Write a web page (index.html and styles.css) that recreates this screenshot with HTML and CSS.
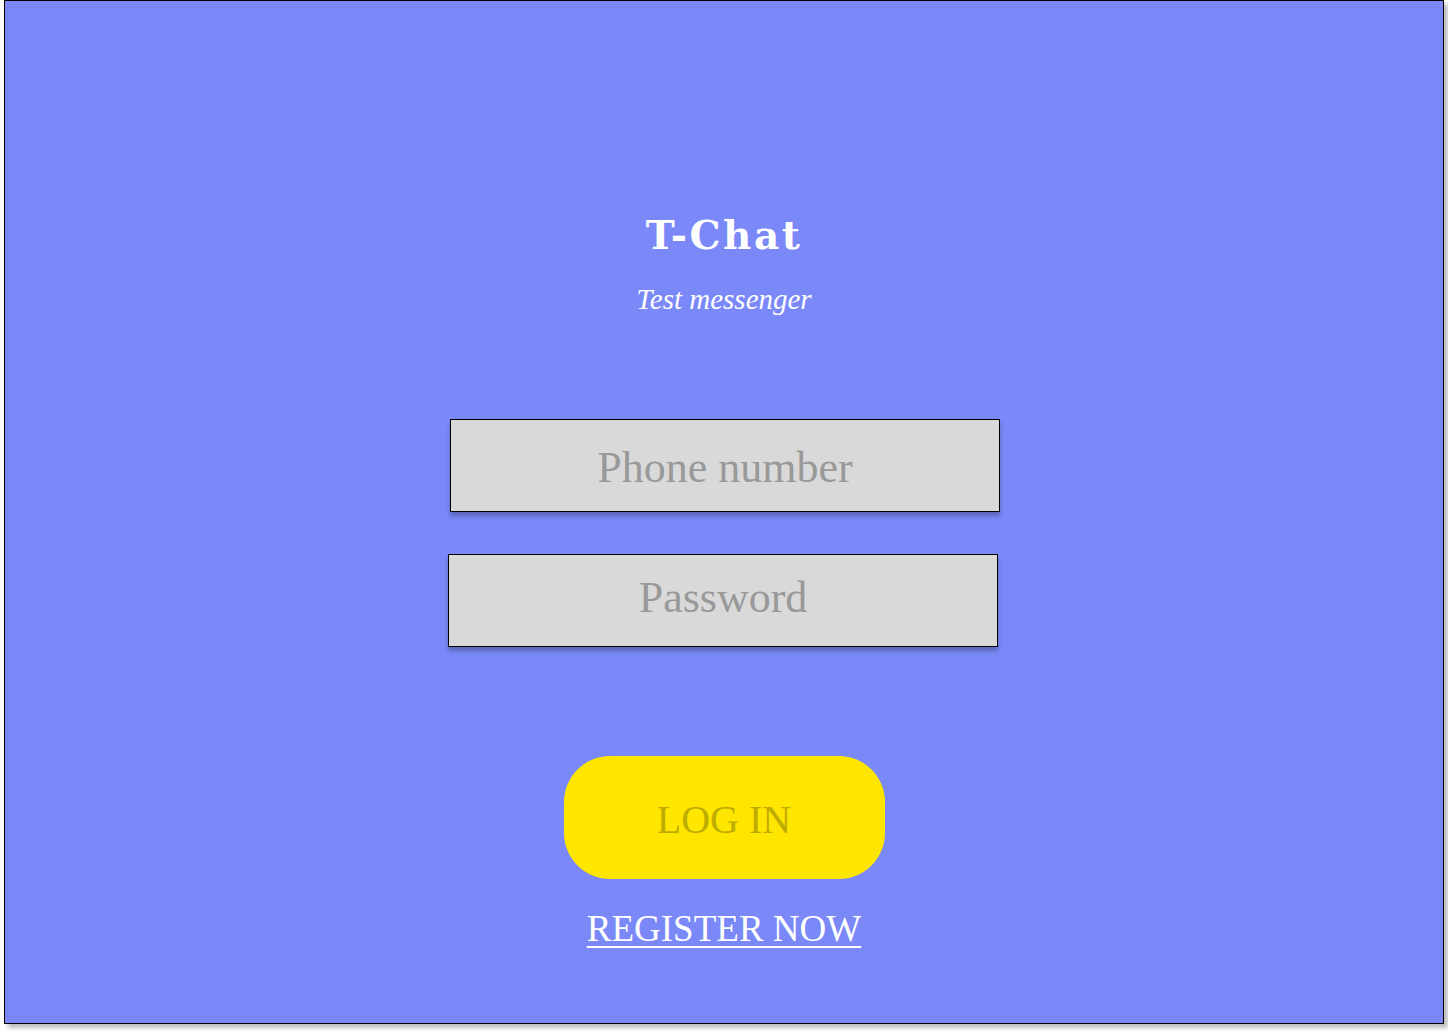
FILE: index.html
```html
<!DOCTYPE html>
<html lang="en">
<head>
<meta charset="utf-8">
<title>T-Chat</title>
<link rel="stylesheet" href="styles.css">
</head>
<body>
<main class="frame">
  <header class="brand">
    <h1 class="brand-title">T-Chat</h1>
    <p class="brand-sub">Test messenger</p>
  </header>
  <form class="login-form">
    <input class="field field-phone" type="text" placeholder="Phone number">
    <input class="field field-pass" type="password" placeholder="Password">
    <button class="btn-login" type="button">LOG IN</button>
    <a class="register-link" href="#">REGISTER NOW</a>
  </form>
</main>
</body>
</html>
```
FILE: styles.css
```css
html, body {
  margin: 0;
  padding: 0;
  background: #ffffff;
}

body {
  width: 1448px;
  height: 1032px;
  overflow: hidden;
}

.frame {
  box-sizing: border-box;
  width: 1440px;
  height: 1024px;
  margin-left: 4px;
  background: #7a88f8;
  border: 1px solid #000;
  box-shadow: 4px 4px 4px rgba(0, 0, 0, 0.25);
  display: flex;
  flex-direction: column;
  align-items: center;
  padding-top: 208px;
}

.brand {
  display: flex;
  flex-direction: column;
  align-items: center;
}

.brand-title {
  margin: 2px 0 0;
  font-family: "DejaVu Serif", serif;
  font-weight: bold;
  font-size: 39px;
  line-height: 48px;
  letter-spacing: 2.5px;
  color: #fff;
}

.brand-sub {
  margin: 23px 0 0;
  font-family: "Liberation Serif", serif;
  font-style: italic;
  font-size: 29px;
  line-height: 34px;
  color: #fff;
}

.login-form {
  display: flex;
  flex-direction: column;
  align-items: center;
  margin-top: 103px;
}

.field {
  box-sizing: border-box;
  width: 550px;
  height: 93px;
  background: #d9d9d9;
  border: 1px solid #000;
  border-radius: 0;
  box-shadow: 0 4px 4px rgba(0, 0, 0, 0.25);
  font-family: "Liberation Serif", serif;
  font-size: 44px;
  color: #555;
  text-align: center;
  outline: none;
  padding: 4px 0 0;
}

.field::placeholder {
  color: #999999;
}

.field-phone {
  margin-left: 2px;
}

.field-pass {
  margin-right: 2px;
  margin-top: 42px;
  padding: 0 0 6px;
}

.btn-login {
  margin-top: 109px;
  width: 321px;
  height: 123px;
  border: none;
  border-radius: 46px;
  background: #ffe600;
  font-family: "Liberation Serif", serif;
  font-size: 40px;
  color: #bfac00;
  cursor: pointer;
  padding: 3px 0 0;
}

.register-link {
  margin-top: 28px;
  font-family: "Liberation Serif", serif;
  font-size: 37px;
  line-height: 44px;
  color: #fff;
  text-decoration: underline;
  text-decoration-thickness: 2px;
  text-underline-offset: 5px;
}
```
